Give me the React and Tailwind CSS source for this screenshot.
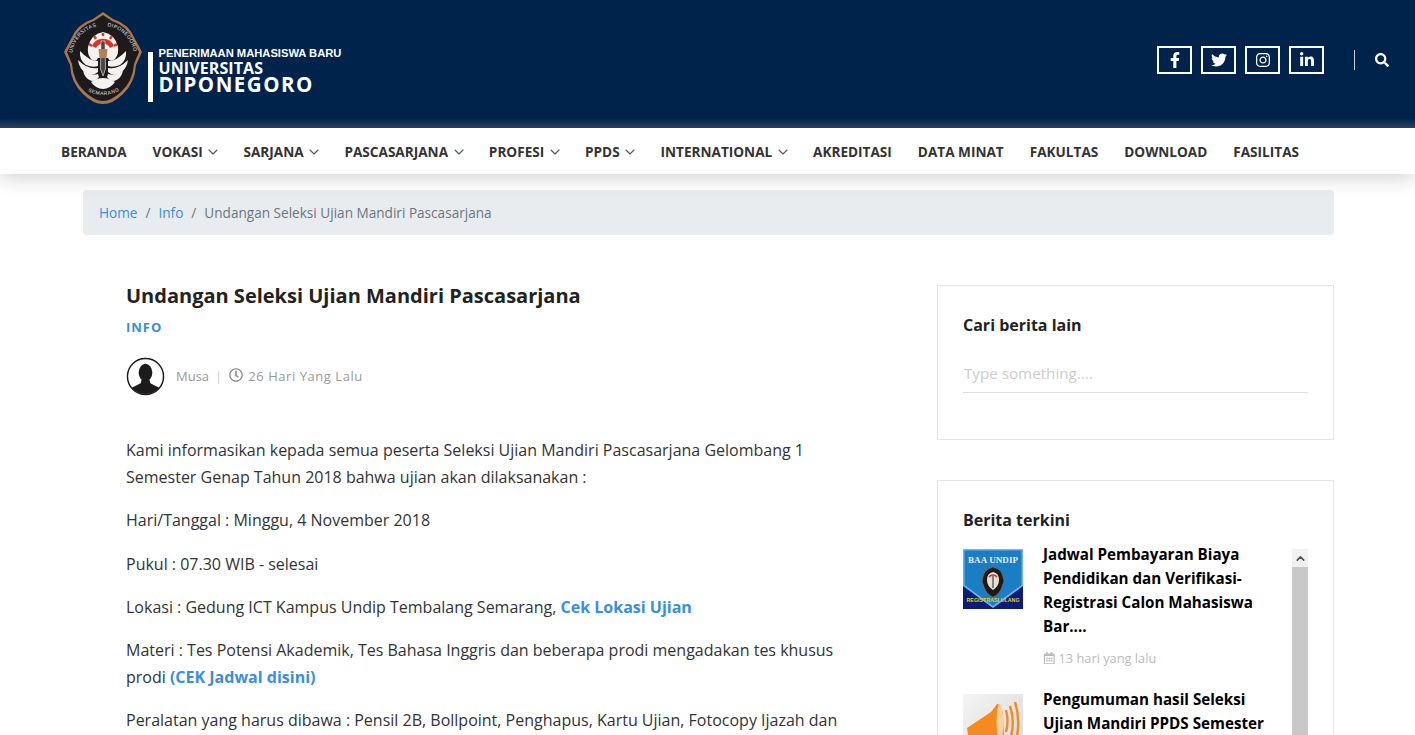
import React from 'react';
import { FaFacebookF, FaTwitter, FaInstagram, FaLinkedinIn, FaSearch, FaRegClock, FaRegCalendarAlt } from 'react-icons/fa';
import { FiChevronDown, FiChevronUp } from 'react-icons/fi';

const navItems = [
  { label: 'Beranda' },
  { label: 'Vokasi', caret: true },
  { label: 'Sarjana', caret: true },
  { label: 'Pascasarjana', caret: true },
  { label: 'Profesi', caret: true },
  { label: 'PPDS', caret: true },
  { label: 'International', caret: true },
  { label: 'Akreditasi' },
  { label: 'Data Minat' },
  { label: 'Fakultas' },
  { label: 'Download' },
  { label: 'Fasilitas' },
];

const socials = [FaFacebookF, FaTwitter, FaInstagram, FaLinkedinIn];

// left half of the lotus, mirrored for the right side
const Petals = () => (
  <g fill="#f4f1ee">
    <path d="M35 50 Q26 50 17 40 Q16 49 23 54 Q30 57 35 55 Z" />
    <path d="M35 57 Q25 59 15 49 Q16 58 24 63 Q31 65 35 61 Z" />
    <path d="M35 63 Q27 65 20 60 Q22 68 29 70 Q33 70 36 66 Z" />
  </g>
);

const Emblem = () => (
  <svg width="80" height="94" viewBox="0 0 80 94" className="shrink-0">
    <path d="M40 1 L50 8 Q66 13 72 28 L79 41 L73 54 Q72 72 60 83 Q50 93 40 93 Q30 93 20 83 Q8 72 7 54 L1 41 L8 28 Q14 13 30 8 Z" fill="#a9764f" />
    <path d="M40 4 L49 10 Q64 15 70 29 L76 41 L71 53 Q70 70 58 81 Q48 90 40 90 Q32 90 22 81 Q10 70 9 53 L4 41 L10 29 Q16 15 31 10 Z" fill="#1c1a1a" />
    <path d="M40 21 Q52 23 55 36 Q56 43 52 48 Q47 52 45 47 L35 47 Q33 52 28 48 Q24 43 25 36 Q28 23 40 21 Z" fill="#f4f1ee" />
    <path d="M29 35 A12 12 0 0 1 51 35 L47 37 A8 8 0 0 0 33 37 Z" fill="#d8342a" />
    <path d="M29 35 L26 33 M33 28 L31 25 M40 25 L40 22 M47 28 L49 25 M51 35 L54 33" stroke="#d8342a" strokeWidth="2.4" />
    <Petals />
    <g transform="translate(80 0) scale(-1 1)">
      <Petals />
    </g>
    <path d="M28 71 Q40 63 52 71 Q47 78 40 78 Q33 78 28 71 Z" fill="#f4f1ee" />
    <path d="M38 30 L42 30 L42.5 58 L40 65 L37.5 58 Z" fill="#4a4644" stroke="#f4f1ee" strokeWidth="0.6" />
    <path d="M35.5 38 L44.5 38 L43.5 47 L36.5 47 Z" fill="#b67f55" />
    <path id="emblemTop" d="M9 46 A31 31 0 0 1 71 46" fill="none" />
    <text fontSize="5.2" fill="#e8e4e0" fontFamily="Liberation Sans, sans-serif" letterSpacing="0.35">
      <textPath href="#emblemTop" startOffset="4">UNIVERSITAS</textPath>
    </text>
    <text fontSize="5.2" fill="#e8e4e0" fontFamily="Liberation Sans, sans-serif" letterSpacing="0.35">
      <textPath href="#emblemTop" startOffset="53">DIPONEGORO</textPath>
    </text>
    <path id="emblemBottom" d="M18 76 Q40 92 62 76" fill="none" />
    <text fontSize="5" fill="#e8e4e0" fontFamily="Liberation Sans, sans-serif" letterSpacing="0.6">
      <textPath href="#emblemBottom" startOffset="8">SEMARANG</textPath>
    </text>
  </svg>
);

const Logo = () => (
  <div className="flex items-end">
    <Emblem />
    <div className="w-[4.5px] h-[50px] bg-white ml-[5px] mb-[3px]" />
    <div className="ml-[6px] mb-[12px] text-white font-['Open_Sans',sans-serif] font-bold">
      <div className="text-[11.2px] leading-[13px] whitespace-nowrap font-['Liberation_Sans',sans-serif]">PENERIMAAN MAHASISWA BARU</div>
      <div className="text-[16px] leading-[15px] mt-[1px] tracking-[0.1px]">UNIVERSITAS</div>
      <div className="text-[20.5px] leading-[17px] tracking-[1.5px]">DIPONEGORO</div>
    </div>
  </div>
);

const BaaThumb = () => (
  <svg width="60" height="60" viewBox="0 0 60 60" className="shrink-0 block">
    <rect width="60" height="60" fill="#0a1b7a" />
    <path d="M0 0 H60 V37 L30 59 L0 37 Z" fill="#6fb6e6" />
    <path d="M1.5 1.5 H58.5 V36 L30 57 L1.5 36 Z" fill="#1b7dc4" />
    <text x="30" y="14" textAnchor="middle" fontSize="9" fontWeight="700" fill="#e6f0f8" fontFamily="Liberation Serif, serif" textLength="50">BAA UNDIP</text>
    <path d="M30 18 L35 20 Q39 22 40 28 L41 32 L39 38 Q36 46 30 48 Q24 46 21 38 L19 32 L20 28 Q21 22 25 20 Z" fill="#1c1a1a" stroke="#a9764f" strokeWidth="0.5" />
    <path d="M30 23 Q36 24 36 31 Q36 37 30 41 Q24 37 24 31 Q24 24 30 23 Z" fill="#e8e0d8" />
    <path d="M26 28 A5 5 0 0 1 34 28" fill="none" stroke="#c8382c" strokeWidth="1.5" />
    <rect x="29.4" y="27" width="1.2" height="12" fill="#4a4644" />
    <text x="30" y="53" textAnchor="middle" fontSize="5.2" fontWeight="700" fill="#e8cf20" fontFamily="Liberation Sans, sans-serif" textLength="53">REGISTRASI ULANG</text>
  </svg>
);

const SpeakerThumb = () => (
  <svg width="60" height="60" viewBox="0 0 60 60" className="shrink-0 block">
    <defs>
      <linearGradient id="thumbBg" x1="0" y1="0" x2="1" y2="1">
        <stop offset="0" stopColor="#f4f4f4" />
        <stop offset="1" stopColor="#d8d8d8" />
      </linearGradient>
    </defs>
    <rect width="60" height="60" fill="url(#thumbBg)" />
    <path d="M4 34 L28 18 L34 10 Q38 9 40 20 L41 44 L30 44 L6 48 Z" fill="#f58a1f" />
    <ellipse cx="37" cy="28" rx="3.5" ry="18" fill="#fbd29f" />
    <path d="M43 16 Q46 27 43 38 M47 12 Q52 27 48 42 M52 8 Q58 27 53 46" fill="none" stroke="#f58a1f" strokeWidth="2.4" />
  </svg>
);

const NewsItem = ({ thumb, title, date }) => (
  <div className="flex items-start mb-6">
    {thumb}
    <div className="ml-5 w-[228px] -mt-[7px]">
      <h4 className="text-[15.2px] leading-[24px] font-bold text-black">{title}</h4>
      {date && (
        <div className="flex items-center gap-[3px] mt-[8px] text-[12.8px] leading-[24px] text-[#bbbbbb]">
          <FaRegCalendarAlt className="text-[12.5px]" />
          <span>{date}</span>
        </div>
      )}
    </div>
  </div>
);

export default function App() {
  return (
    <div className="h-[735px] overflow-hidden bg-white font-['Open_Sans',sans-serif] text-[#212529]">
      {/* Header */}
      <header className="h-[128px] bg-[linear-gradient(#00234b_0,#00234b_118px,#2a4768_128px)] flex items-start justify-between pl-[63px] pr-[26px]">
        <div className="pt-[11px]">
          <Logo />
        </div>
        <div className="flex items-center pt-[46px]">
          <div className="flex gap-[9px]">
            {socials.map((Icon, i) => (
              <a key={i} className="w-[35px] h-[28px] border-2 border-white flex items-center justify-center text-white text-[16px]">
                <Icon />
              </a>
            ))}
          </div>
          <div className="w-px h-5 bg-[#c8d0da] ml-[30px]" />
          <FaSearch className="text-white text-[14px] ml-[20px]" />
        </div>
      </header>

      {/* Nav */}
      <nav className="relative z-10 h-[46px] pt-[2px] bg-white shadow-[0_4px_20px_rgba(0,0,0,0.18)] flex items-center pl-[61px] gap-[26px]">
        {navItems.map((item) => (
          <a key={item.label} className="flex items-center text-[13.6px] font-bold uppercase text-[#333333] whitespace-nowrap">
            {item.label}
            {item.caret && <FiChevronDown className="ml-[2.5px] -mr-[3.7px] text-[16px] stroke-[1.6] text-[#555555]" />}
          </a>
        ))}
      </nav>

      {/* Breadcrumb */}
      <div className="ml-[83px] w-[1251px] h-[45px] mt-[16px] pt-[2px] bg-[#e9ecef] rounded flex items-center px-4 text-[13.6px] text-[#6c757d]">
        <a className="text-[#3a8ee0]">Home</a>
        <span className="px-2">/</span>
        <a className="text-[#3a8ee0]">Info</a>
        <span className="px-2">/</span>
        <span>Undangan Seleksi Ujian Mandiri Pascasarjana</span>
      </div>

      {/* Main */}
      <div className="flex mt-[50px]">
        <article className="ml-[126px] w-[720px] -mt-px">
          <h1 className="text-[20px] leading-[24px] font-bold text-[#222222]">Undangan Seleksi Ujian Mandiri Pascasarjana</h1>
          <div className="mt-[10px] text-[13px] leading-[18px] font-bold tracking-[1px] text-[#3a8ee0]">INFO</div>

          <div className="flex items-center mt-[21px] text-[13px] text-[#999999]">
            <svg width="39" height="39" viewBox="0 0 40 40" className="shrink-0">
              <defs>
                <clipPath id="avatarClip">
                  <circle cx="20" cy="20" r="18" />
                </clipPath>
              </defs>
              <circle cx="20" cy="20" r="18.5" fill="#fff" stroke="#1c1a1a" strokeWidth="1.5" />
              <g clipPath="url(#avatarClip)" fill="#1c1a1a">
                <ellipse cx="20" cy="16" rx="7" ry="9" />
                <path d="M16 23 L24 23 L25 27 L35 32 L36 40 L4 40 L5 32 L15 27 Z" />
              </g>
            </svg>
            <span className="ml-[11px]">Musa</span>
            <span className="ml-[6px] mr-[10px] text-[#cccccc]">|</span>
            <FaRegClock className="text-[14px] text-[#888888] -mt-[3px] -ml-[3px]" />
            <span className="ml-[5px] mt-px tracking-[0.55px]">26 Hari Yang Lalu</span>
          </div>

          <div className="mt-[41px] text-[16px] leading-[27.2px] text-[#333333]">
            <p className="mb-4">Kami informasikan kepada semua peserta Seleksi Ujian Mandiri Pascasarjana Gelombang 1 Semester Genap Tahun 2018 bahwa ujian akan dilaksanakan :</p>
            <p className="mb-4">Hari/Tanggal : Minggu, 4 November 2018</p>
            <p className="mb-4">Pukul : 07.30 WIB - selesai</p>
            <p className="mb-4">Lokasi : Gedung ICT Kampus Undip Tembalang Semarang, <a className="font-bold text-[#3a8ee0]">Cek Lokasi Ujian</a></p>
            <p className="mb-4">Materi : Tes Potensi Akademik, Tes Bahasa Inggris dan beberapa prodi mengadakan tes khusus prodi <a className="font-bold text-[#3a8ee0]">(CEK Jadwal disini)</a></p>
            <p className="mb-4">Peralatan yang harus dibawa : Pensil 2B, Bollpoint, Penghapus, Kartu Ujian, Fotocopy Ijazah dan</p>
          </div>
        </article>

        <aside className="ml-[91px] w-[397px]">
          <div className="h-[155px] border border-[#e5e5e5] px-[25px] pt-[28px]">
            <h3 className="text-[16px] leading-[22px] font-bold text-[#222222]">Cari berita lain</h3>
            <input
              placeholder="Type something...."
              className="mt-[17px] w-full h-[40px] border-b border-[#dddddd] pl-px text-[15.2px] outline-none placeholder:text-[#cccccc]"
            />
          </div>

          <div className="mt-10 border border-[#e5e5e5] pl-[25px] pr-[25px] pt-[28px] h-[400px]">
            <h3 className="text-[16px] leading-[22px] font-bold text-[#222222]">Berita terkini</h3>
            <div className="flex justify-between mt-[18px]">
              <div>
                <NewsItem
                  thumb={<BaaThumb />}
                  title="Jadwal Pembayaran Biaya Pendidikan dan Verifikasi-Registrasi Calon Mahasiswa Bar...."
                  date="13 hari yang lalu"
                />
                <NewsItem
                  thumb={<SpeakerThumb />}
                  title="Pengumuman hasil Seleksi Ujian Mandiri PPDS Semester"
                />
              </div>
              <div className="w-4 shrink-0 bg-[#c8c8c8] h-[300px]">
                <div className="h-[18px] bg-[#f1f1f1] flex items-center justify-center text-[#505050]">
                  <FiChevronUp className="text-[13px] stroke-[3]" />
                </div>
              </div>
            </div>
          </div>
        </aside>
      </div>
    </div>
  );
}
